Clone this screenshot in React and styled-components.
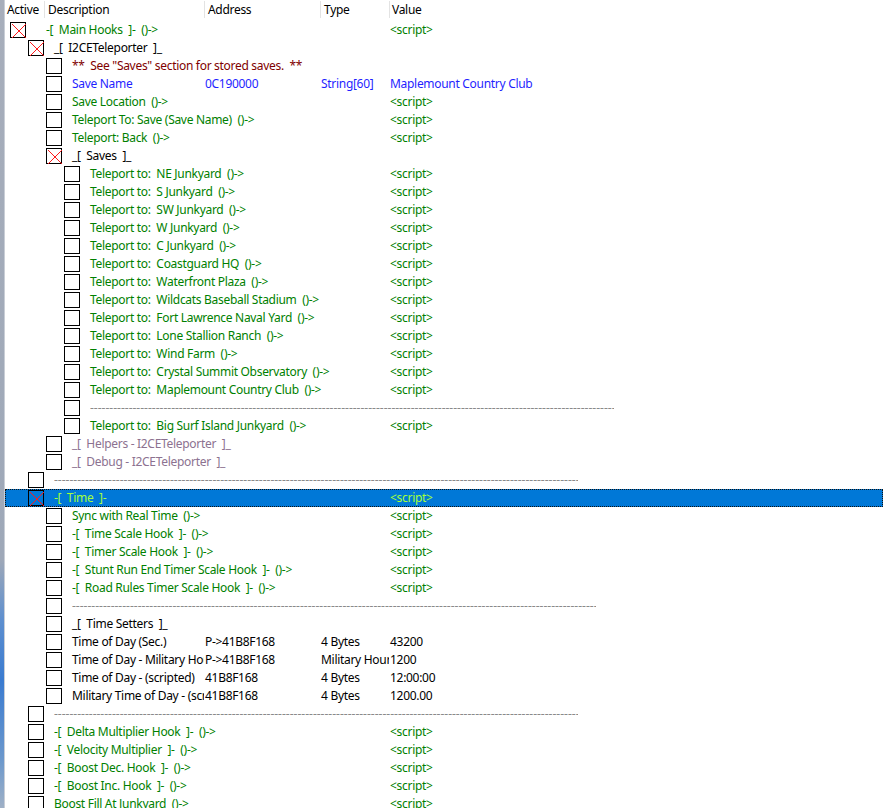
import React from "react";
import styled, { createGlobalStyle, css } from "styled-components";

const Global = createGlobalStyle`
  html, body { margin: 0; padding: 0; background: #fff; }
  body { width: 883px; height: 808px; overflow: hidden; }
  #root { height: 808px; }
`;

const C = {
  script: "#008000",
  note: "#800000",
  blue: "#1f1fff",
  group: "#000000",
  muted: "#8c7290",
  plain: "#000000",
  divider: "#8a8a8a",
};

const Window = styled.div`
  display: flex;
  height: 808px;
  overflow: hidden;
  font-family: "Segoe UI", "Noto Sans", sans-serif;
  font-size: 12px;
  letter-spacing: -0.3px;
  color: #000;
`;

const EdgeStrip = styled.div`
  width: 5px;
  flex: none;
  background: linear-gradient(
    to bottom,
    #a7aebb 0px,
    #9ea8b8 560px,
    #5e8fcf 620px,
    #3a7bd0 680px,
    #6c98cc 760px,
    #9fb0c6 808px
  );
  border-right: 1px solid #c9ced6;
  box-sizing: border-box;
`;

const ListView = styled.div`
  flex: 1;
  display: flex;
  flex-direction: column;
  background: #fff;
`;

const Header = styled.div`
  display: grid;
  grid-template-columns: 39px 160px 116px 69px 1fr;
  height: 21px;
  flex: none;
`;

const HeadCell = styled.div`
  position: relative;
  display: flex;
  align-items: center;
  padding-left: ${(p) => p.$pad}px;
  padding-bottom: 2px;
  white-space: pre;
  ${(p) =>
    p.$sep &&
    css`
      &::before {
        content: "";
        position: absolute;
        left: 0;
        top: 1px;
        bottom: 3px;
        width: 1px;
        background: #e3e3e3;
      }
    `}
`;

const Rows = styled.div`
  display: flex;
  flex-direction: column;
`;

const Row = styled.div`
  display: grid;
  grid-template-columns: 199px 116px 69px 1fr;
  height: 18px;
  flex: none;
  box-sizing: border-box;
  align-items: center;
  color: ${(p) => p.$color};
  ${(p) =>
    p.$selected &&
    css`
      background: #0078d7;
      color: #a4ff3c;
      outline: 1px dotted #111;
      outline-offset: -1px;
    `}
`;

const DescCell = styled.div`
  display: flex;
  align-items: center;
  min-width: 0;
  height: 18px;
  padding-left: ${(p) => 5 + p.$level * 18}px;
  white-space: pre;
  overflow: ${(p) => (p.$clip ? "hidden" : "visible")};
  box-sizing: border-box;
`;

const Box = styled.span`
  flex: none;
  width: 16px;
  height: 16px;
  box-sizing: border-box;
  border: 1px solid #000;
  background: ${(p) => (p.$selected ? "#0078d7" : "#fff")};
  display: inline-flex;
  position: relative;
  svg {
    position: absolute;
    inset: 0;
  }
`;

const DescText = styled.span`
  margin-left: ${(p) => (p.$level === 0 ? 20 : 10)}px;
  white-space: pre;
  line-height: 18px;
  padding-bottom: 1px;
`;

const Divider = styled.span`
  margin-left: ${(p) => (p.$level === 0 ? 20 : 10)}px;
  width: 524px;
  flex: none;
  overflow: hidden;
  white-space: pre;
  letter-spacing: 0;
  color: ${C.divider};
  line-height: 18px;
  padding-bottom: 1px;
`;

const Cell = styled.div`
  padding-left: 1px;
  white-space: pre;
  overflow: hidden;
  min-width: 0;
  line-height: 18px;
  padding-bottom: 1px;
  ${(p) => p.$clipRight && css`padding-right: 3px;`}
`;

function CheckBox({ checked, selected }) {
  return (
    <Box $selected={selected}>
      {checked && (
        <svg width="16" height="16" viewBox="0 0 16 16">
          <line x1="1" y1="1" x2="15" y2="15" stroke="#ff1a1a" strokeWidth="1" />
          <line x1="15" y1="1" x2="1" y2="15" stroke="#ff1a1a" strokeWidth="1" />
        </svg>
      )}
    </Box>
  );
}

const S = "<script>";
const DASHES = "-".repeat(160);

const tp = (name) => ({
  level: 3,
  text: `Teleport to:  ${name}  ()->`,
  color: C.script,
  value: S,
});

const rows = [
  { level: 0, checked: true, text: "-[  Main Hooks  ]-  ()->", color: C.script, value: S },
  { level: 1, checked: true, text: "_[  I2CETeleporter  ]_", color: C.group },
  { level: 2, text: '**  See "Saves" section for stored saves.  **', color: C.note },
  {
    level: 2,
    text: "Save Name",
    color: C.blue,
    address: "0C190000",
    type: "String[60]",
    value: "Maplemount Country Club",
  },
  { level: 2, text: "Save Location  ()->", color: C.script, value: S },
  { level: 2, text: "Teleport To: Save (Save Name)  ()->", color: C.script, value: S },
  { level: 2, text: "Teleport: Back  ()->", color: C.script, value: S },
  { level: 2, checked: true, text: "_[  Saves  ]_", color: C.group },
  tp("NE Junkyard"),
  tp("S Junkyard"),
  tp("SW Junkyard"),
  tp("W Junkyard"),
  tp("C Junkyard"),
  tp("Coastguard HQ"),
  tp("Waterfront Plaza"),
  tp("Wildcats Baseball Stadium"),
  tp("Fort Lawrence Naval Yard"),
  tp("Lone Stallion Ranch"),
  tp("Wind Farm"),
  tp("Crystal Summit Observatory"),
  tp("Maplemount Country Club"),
  { level: 3, divider: true },
  tp("Big Surf Island Junkyard"),
  { level: 2, text: "_[  Helpers - I2CETeleporter  ]_", color: C.muted },
  { level: 2, text: "_[  Debug - I2CETeleporter  ]_", color: C.muted },
  { level: 1, divider: true },
  { level: 1, checked: true, selected: true, text: "-[  Time  ]-", color: C.script, value: S },
  { level: 2, text: "Sync with Real Time  ()->", color: C.script, value: S },
  { level: 2, text: "-[  Time Scale Hook  ]-  ()->", color: C.script, value: S },
  { level: 2, text: "-[  Timer Scale Hook  ]-  ()->", color: C.script, value: S },
  { level: 2, text: "-[  Stunt Run End Timer Scale Hook  ]-  ()->", color: C.script, value: S },
  { level: 2, text: "-[  Road Rules Timer Scale Hook  ]-  ()->", color: C.script, value: S },
  { level: 2, divider: true },
  { level: 2, text: "_[  Time Setters  ]_", color: C.group },
  {
    level: 2,
    text: "Time of Day (Sec.)",
    color: C.plain,
    address: "P->41B8F168",
    type: "4 Bytes",
    value: "43200",
  },
  {
    level: 2,
    text: "Time of Day - Military Hours",
    color: C.plain,
    address: "P->41B8F168",
    type: "Military Hours",
    value: "1200",
  },
  {
    level: 2,
    text: "Time of Day - (scripted)",
    color: C.plain,
    address: "41B8F168",
    type: "4 Bytes",
    value: "12:00:00",
  },
  {
    level: 2,
    text: "Military Time of Day - (scripted)",
    color: C.plain,
    address: "41B8F168",
    type: "4 Bytes",
    value: "1200.00",
  },
  { level: 1, divider: true },
  { level: 1, text: "-[  Delta Multiplier Hook  ]-  ()->", color: C.script, value: S },
  { level: 1, text: "-[  Velocity Multiplier  ]-  ()->", color: C.script, value: S },
  { level: 1, text: "-[  Boost Dec. Hook  ]-  ()->", color: C.script, value: S },
  { level: 1, text: "-[  Boost Inc. Hook  ]-  ()->", color: C.script, value: S },
  { level: 1, text: "Boost Fill At Junkyard  ()->", color: C.script, value: S },
];

export default function App() {
  return (
    <>
      <Global />
      <Window>
        <EdgeStrip />
        <ListView>
          <Header>
            <HeadCell $pad={2}>Active</HeadCell>
            <HeadCell $pad={4} $sep>Description</HeadCell>
            <HeadCell $pad={4} $sep>Address</HeadCell>
            <HeadCell $pad={4} $sep>Type</HeadCell>
            <HeadCell $pad={3} $sep>Value</HeadCell>
          </Header>
          <Rows>
            {rows.map((r, i) => (
              <Row key={i} $color={r.color || C.plain} $selected={r.selected}>
                <DescCell $level={r.level} $clip={!!r.address}>
                  <CheckBox checked={r.checked} selected={r.selected} />
                  {r.divider ? (
                    <Divider $level={r.level}>{DASHES}</Divider>
                  ) : (
                    <DescText $level={r.level}>{r.text}</DescText>
                  )}
                </DescCell>
                <Cell>{r.address || ""}</Cell>
                <Cell $clipRight>{r.type || ""}</Cell>
                <Cell>{r.value || ""}</Cell>
              </Row>
            ))}
          </Rows>
        </ListView>
      </Window>
    </>
  );
}
